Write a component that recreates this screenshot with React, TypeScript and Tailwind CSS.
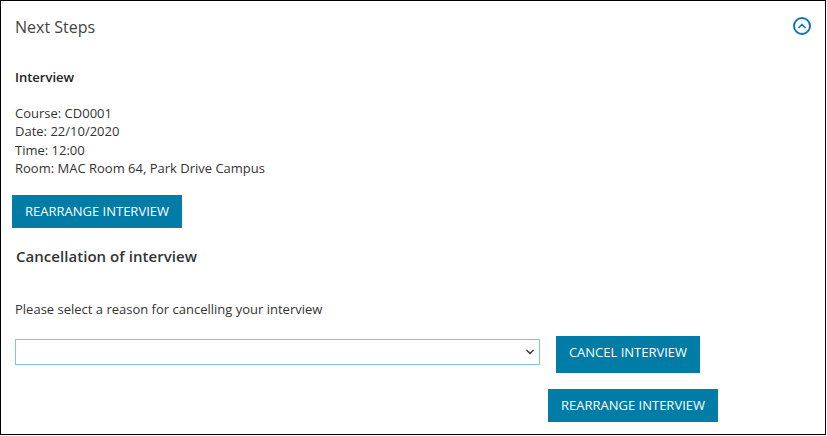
import { ChevronDown, ChevronUp } from "lucide-react";

function ActionButton({ label, className }: { label: string; className: string }) {
  return (
    <button
      type="button"
      className={`flex items-center justify-center bg-[#007ca6] text-[13px] text-white ${className}`}
    >
      {label}
    </button>
  );
}

export default function App() {
  return (
    <div className="h-[436px] w-[827px] bg-white font-['Open_Sans',sans-serif] text-[#333]">
      <div className="flex h-[435px] w-[826px] flex-col border border-black">
        {/* Header */}
        <div className="flex h-[52px] items-center justify-between pl-[14px] pr-[14px]">
          <h2 className="text-[16px] text-[#444]">Next Steps</h2>
          <span className="mb-[2px] flex h-[18px] w-[18px] items-center justify-center rounded-full border-2 border-[#0f76bc]">
            <ChevronUp className="h-3 w-3 text-[#0f76bc]" strokeWidth={3.5} />
          </span>
        </div>

        {/* Interview details */}
        <div className="pl-[14px] pt-[15px] text-[13px] leading-[18.2px]">
          <p className="font-semibold text-[#222]">Interview</p>
          <p className="mt-[18px]">Course: CD0001</p>
          <p>Date: 22/10/2020</p>
          <p>Time: 12:00</p>
          <p>Room: MAC Room 64, Park Drive Campus</p>
        </div>

        <ActionButton label="REARRANGE INTERVIEW" className="ml-[11px] mt-[18px] h-[33px] w-[170px]" />

        {/* Cancellation */}
        <h3 className="ml-[15px] mt-[17px] text-[15px] font-semibold leading-[22px] tracking-[0.04px] text-[#333]">
          Cancellation of interview
        </h3>
        <p className="ml-[14px] mt-[33px] text-[13px] leading-[18px]">
          Please select a reason for cancelling your interview
        </p>

        <div className="mt-[18px] flex items-start">
          <div className="relative ml-[14px] mt-[3px] h-[26px] w-[525px] border border-[#80bdff] bg-white">
            <ChevronDown
              className="absolute right-[3px] top-[6px] h-3 w-3 text-[#444]"
              strokeWidth={3.5}
            />
          </div>
          <ActionButton label="CANCEL INTERVIEW" className="ml-[16px] h-[37px] w-[144px] pb-[4px]" />
        </div>

        <ActionButton label="REARRANGE INTERVIEW" className="ml-[547px] mt-[16px] h-[33px] w-[170px]" />
      </div>
    </div>
  );
}
